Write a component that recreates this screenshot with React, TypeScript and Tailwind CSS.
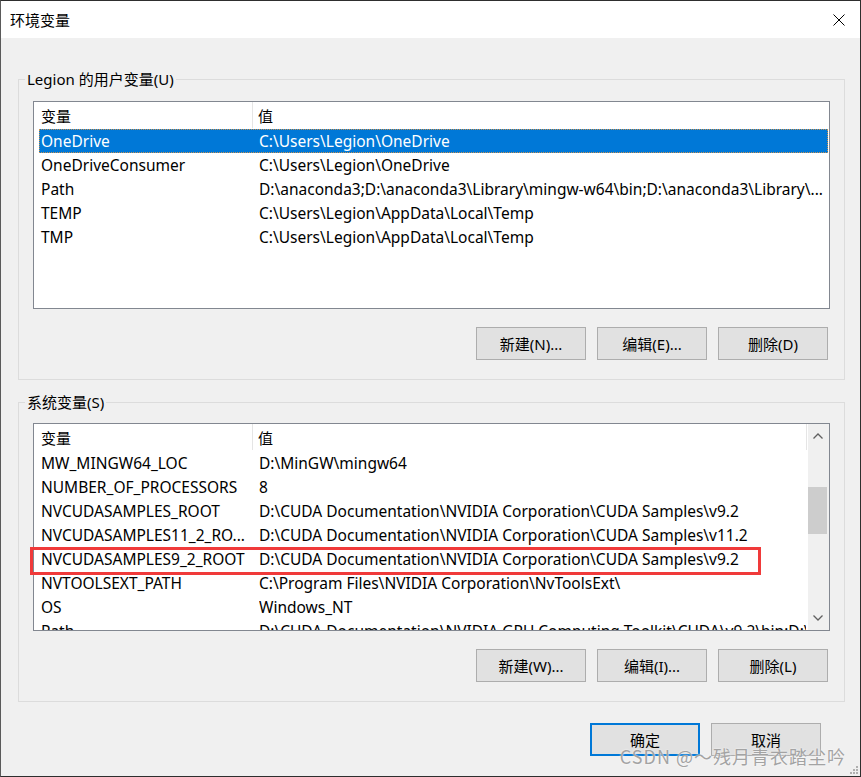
import React from "react";

const userVars = [
  { name: "OneDrive", value: "C:\\Users\\Legion\\OneDrive", selected: true },
  { name: "OneDriveConsumer", value: "C:\\Users\\Legion\\OneDrive" },
  { name: "Path", value: "D:\\anaconda3;D:\\anaconda3\\Library\\mingw-w64\\bin;D:\\anaconda3\\Library\\..." },
  { name: "TEMP", value: "C:\\Users\\Legion\\AppData\\Local\\Temp" },
  { name: "TMP", value: "C:\\Users\\Legion\\AppData\\Local\\Temp" },
];

const sysVars = [
  { name: "MW_MINGW64_LOC", value: "D:\\MinGW\\mingw64" },
  { name: "NUMBER_OF_PROCESSORS", value: "8" },
  { name: "NVCUDASAMPLES_ROOT", value: "D:\\CUDA Documentation\\NVIDIA Corporation\\CUDA Samples\\v9.2" },
  { name: "NVCUDASAMPLES11_2_RO...", value: "D:\\CUDA Documentation\\NVIDIA Corporation\\CUDA Samples\\v11.2" },
  { name: "NVCUDASAMPLES9_2_ROOT", value: "D:\\CUDA Documentation\\NVIDIA Corporation\\CUDA Samples\\v9.2" },
  { name: "NVTOOLSEXT_PATH", value: "C:\\Program Files\\NVIDIA Corporation\\NvToolsExt\\" },
  { name: "OS", value: "Windows_NT" },
  { name: "Path", value: "D:\\CUDA Documentation\\NVIDIA GPU Computing Toolkit\\CUDA\\v9.2\\bin;D:\\..." },
];

type Row = { name: string; value: string; selected?: boolean };

function Btn({ children, primary }: { children: React.ReactNode; primary?: boolean }) {
  return (
    <button
      className={
        "flex h-[33px] w-[110px] items-center justify-center bg-[#e1e1e1] text-[15px] text-black " +
        (primary ? "border-2 border-[#0078d7]" : "border border-[#adadad]")
      }
    >
      {children}
    </button>
  );
}

function Header({ endLine }: { endLine?: boolean }) {
  return (
    <div className="flex h-[27px] shrink-0 items-center">
      <div className="w-[218px] pl-[7px]">变量</div>
      <div className="h-[26px] w-px self-start bg-[#e5e5e5]" />
      <div className="flex-1 pl-[5px]">值</div>
      {endLine && <div className="mr-px h-[26px] w-px self-start bg-[#e5e5e5]" />}
    </div>
  );
}

function ListRow({ row }: { row: Row }) {
  return (
    <div
      className={
        "ml-[5px] mr-px flex h-[24px] shrink-0 items-center whitespace-nowrap text-[15.5px] " +
        (row.selected
          ? "border border-dotted border-[#c9914f] bg-[#0078d7] text-white"
          : "border border-transparent")
      }
    >
      <div className="w-[219px] shrink-0 overflow-hidden pl-px">{row.name}</div>
      <div className="min-w-0 flex-1 overflow-hidden">{row.value}</div>
    </div>
  );
}

function Chevron({ up }: { up?: boolean }) {
  return (
    <svg width="10" height="6" viewBox="0 0 10 6">
      <path
        d={up ? "M0.5 5.5 L5 1 L9.5 5.5" : "M0.5 0.5 L5 5 L9.5 0.5"}
        fill="none"
        stroke="#606060"
        strokeWidth="1.3"
      />
    </svg>
  );
}

export default function App() {
  return (
    <div className="relative flex h-[777px] w-[861px] flex-col border border-[#2e2e2e] border-l-[#5a5a5a] bg-[#f0f0f0] font-['Noto_Sans','Noto_Sans_CJK_SC',sans-serif] text-[15px] leading-[20px] text-black">
      {/* title bar */}
      <div className="flex h-[37px] shrink-0 items-center justify-between bg-white pl-[9px] pr-[15px]">
        <span className="font-['Noto_Sans_CJK_SC',sans-serif]">环境变量</span>
        <svg width="12" height="12" viewBox="0 0 12 12">
          <path d="M0.5 0.5 L11.5 11.5 M11.5 0.5 L0.5 11.5" stroke="#000" strokeWidth="1" />
        </svg>
      </div>

      <div className="flex min-w-0 flex-1 flex-col pl-[17px] pr-[15px] pt-[31px]">
        {/* user vars */}
        <fieldset className="min-w-0 border border-[#dcdcdc]">
          <legend className="ml-[6px] px-[2px]">Legion 的用户变量(U)</legend>
          <div className="px-[14px] pb-[19px] pt-[12px]">
            <div className="flex h-[208px] flex-col overflow-hidden border border-[#828790] bg-white">
              <Header />
              {userVars.map((r) => (
                <ListRow key={r.name} row={r} />
              ))}
            </div>
            <div className="mt-[18px] flex justify-end gap-[11px] pr-[2px]">
              <Btn>新建(N)...</Btn>
              <Btn>编辑(E)...</Btn>
              <Btn>删除(D)</Btn>
            </div>
          </div>
        </fieldset>

        {/* system vars */}
        <fieldset className="mt-[12px] min-w-0 border border-[#dcdcdc]">
          <legend className="ml-[6px] px-[2px]">系统变量(S)</legend>
          <div className="px-[14px] pb-[19px] pt-[11px]">
            <div className="relative">
              <div className="flex h-[208px] overflow-hidden border border-[#828790] bg-white">
                <div className="flex min-w-0 flex-1 flex-col">
                  <Header endLine />
                  {sysVars.map((r) => (
                    <ListRow key={r.name + r.value} row={r} />
                  ))}
                </div>
                <div className="flex w-[21px] shrink-0 flex-col bg-[#f0f0f0]">
                  <div className="flex h-[24px] items-center justify-center pr-[2px]">
                    <Chevron up />
                  </div>
                  <div className="h-[39px]" />
                  <div className="h-[47px] w-[19px] bg-[#cdcdcd]" />
                  <div className="flex-1" />
                  <div className="flex h-[24px] items-center justify-center pr-[2px]">
                    <Chevron />
                  </div>
                </div>
              </div>
              {/* red annotation box */}
              <div className="pointer-events-none absolute left-[-3px] top-[124px] h-[28px] w-[731px] border-[3px] border-[#f03a3a]" />
            </div>
            <div className="mt-[18px] flex justify-end gap-[11px] pr-[2px]">
              <Btn>新建(W)...</Btn>
              <Btn>编辑(I)...</Btn>
              <Btn>删除(L)</Btn>
            </div>
          </div>
        </fieldset>

        <div className="mt-[21px] flex justify-end gap-[11px] pr-[24px]">
          <Btn primary>确定</Btn>
          <Btn>取消</Btn>
        </div>
      </div>

      {/* watermark */}
      <div className="pointer-events-none absolute bottom-[8px] right-[14px] font-['Noto_Sans_CJK_SC',sans-serif] text-[18px] leading-[24px] tracking-[1px] text-[#a3a3a3] [text-shadow:0_0_2px_#ffffff]">
        CSDN @～残月青衣踏尘吟
      </div>
      {/* resize grip */}
      <svg className="absolute bottom-[1px] right-[1px]" width="10" height="10" viewBox="0 0 10 10">
        <rect x="7" y="1" width="2" height="2" fill="#b0b0b0" />
        <rect x="4" y="4" width="2" height="2" fill="#b0b0b0" />
        <rect x="7" y="4" width="2" height="2" fill="#b0b0b0" />
        <rect x="1" y="7" width="2" height="2" fill="#b0b0b0" />
        <rect x="4" y="7" width="2" height="2" fill="#b0b0b0" />
        <rect x="7" y="7" width="2" height="2" fill="#b0b0b0" />
      </svg>
    </div>
  );
}
